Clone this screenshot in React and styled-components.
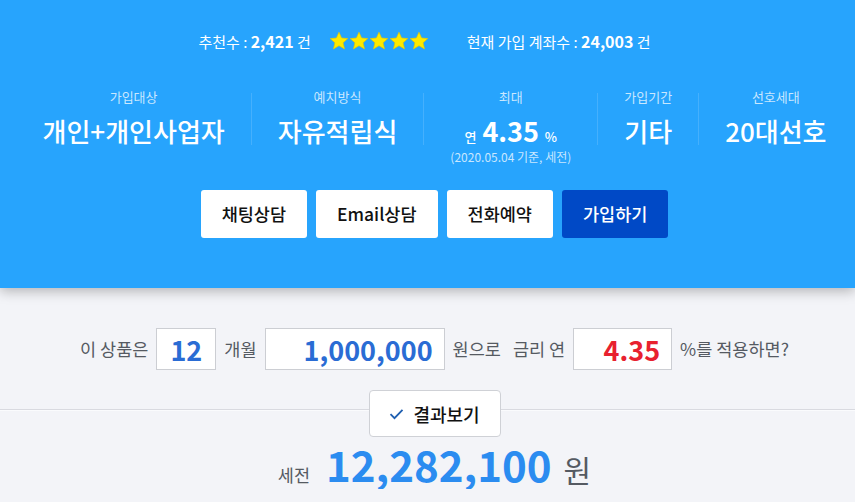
import React from "react";
import styled, { createGlobalStyle } from "styled-components";

const GlobalStyle = createGlobalStyle`
  body {
    margin: 0;
    background: #f3f4f8;
    font-family: "Noto Sans CJK KR", "Noto Sans", sans-serif;
  }
`;

const infos = [
  { label: "가입대상", value: "개인+개인사업자" },
  { label: "예치방식", value: "자유적립식" },
  { label: "최대", rate: true },
  { label: "가입기간", value: "기타" },
  { label: "선호세대", value: "20대선호" },
];

const buttons = ["채팅상담", "Email상담", "전화예약", "가입하기"];

function Star() {
  return (
    <svg width="20" height="20" viewBox="0 0 24 24">
      <path
        d="M12 1.5l3.1 6.9 7.4.7-5.6 5 1.7 7.4L12 17.6l-6.6 3.9 1.7-7.4-5.6-5 7.4-.7z"
        fill="#ffea00"
        stroke="#e6c800"
        strokeWidth="0.8"
        strokeLinejoin="round"
      />
    </svg>
  );
}

function Check() {
  return (
    <svg width="15" height="12" viewBox="0 0 15 12">
      <path d="M1.5 6.2l4 4L13.5 1.8" fill="none" stroke="#1f5fb0" strokeWidth="1.8" />
    </svg>
  );
}

function App() {
  return (
    <>
      <GlobalStyle />
      <Header>
        <TopRow>
          <Stat>
            추천수 : <b>2,421</b> 건
          </Stat>
          <Stars>
            {[0, 1, 2, 3, 4].map((i) => (
              <Star key={i} />
            ))}
          </Stars>
          <Stat>
            현재 가입 계좌수 : <b>24,003</b> 건
          </Stat>
        </TopRow>

        <InfoRow>
          {infos.map((info, idx) => (
            <React.Fragment key={info.label}>
              {idx > 0 && <Divider />}
              <Column>
                <Label>{info.label}</Label>
                {info.rate ? (
                  <>
                    <Value>
                      <Small>연</Small> <Rate>4.35</Rate> <Small>%</Small>
                    </Value>
                    <Note>(2020.05.04 기준, 세전)</Note>
                  </>
                ) : (
                  <Value>{info.value}</Value>
                )}
              </Column>
            </React.Fragment>
          ))}
        </InfoRow>

        <ButtonRow>
          {buttons.map((b, idx) => (
            <Button key={b} primary={idx === 3}>
              {b}
            </Button>
          ))}
        </ButtonRow>
      </Header>

      <Calc>
        <CalcRow>
          <Text>이 상품은</Text>
          <Box width={60} align="center">
            12
          </Box>
          <Text>개월</Text>
          <Box width={180}>1,000,000</Box>
          <Text>원으로</Text>
          <Text gap={4}>금리 연</Text>
          <Box width={99} red>
            4.35
          </Box>
          <Text>%를 적용하면?</Text>
        </CalcRow>

        <ResultBar>
          <ResultButton>
            <Check />
            결과보기
          </ResultButton>
        </ResultBar>

        <Result>
          <Text>세전</Text>
          <Amount>12,282,100</Amount>
          <Won>원</Won>
        </Result>
      </Calc>
    </>
  );
}

const Header = styled.header`
  position: relative;
  z-index: 1;
  background: #27a4fd;
  color: #fff;
  padding: 30px 0 50px;
  box-shadow: 0 3px 12px rgba(0, 0, 0, 0.28);
`;

const TopRow = styled.div`
  display: flex;
  justify-content: center;
  align-items: center;
  height: 22px;
  padding-right: 6px;
`;

const Stat = styled.div`
  font-size: 15px;
  line-height: 22px;
  b {
    font-weight: 700;
    font-size: 16px;
  }
`;

const Stars = styled.div`
  display: flex;
  margin: 0 38px 0 18px;
`;

const InfoRow = styled.div`
  display: flex;
  justify-content: center;
  margin-top: 36px;
  padding-left: 14px;
`;

const Divider = styled.div`
  width: 1px;
  height: 52px;
  margin-top: 5px;
  background: rgba(255, 255, 255, 0.14);
`;

const Column = styled.div`
  display: flex;
  flex-direction: column;
  align-items: center;
  padding: 0 26px;
`;

const Label = styled.div`
  font-size: 13px;
  line-height: 18px;
  color: rgba(255, 255, 255, 0.75);
`;

const Value = styled.div`
  margin-top: 8px;
  font-size: 26px;
  font-weight: 500;
  line-height: 34px;
  white-space: nowrap;
`;

const Small = styled.span`
  font-size: 13px;
  line-height: 1;
`;

const Rate = styled.span`
  font-size: 27px;
  font-weight: 700;
  line-height: 1;
`;

const Note = styled.div`
  margin-top: 1px;
  font-size: 12px;
  line-height: 16px;
  color: rgba(255, 255, 255, 0.75);
`;

const ButtonRow = styled.div`
  display: flex;
  justify-content: center;
  gap: 9px;
  margin-top: 25px;
  padding-left: 14px;
`;

const Button = styled.button`
  height: 48px;
  padding: 0 21px;
  border: none;
  border-radius: 3px;
  font-family: inherit;
  font-size: 17.5px;
  font-weight: 500;
  line-height: 1;
  background: ${(p) => (p.primary ? "#0049c6" : "#fff")};
  color: ${(p) => (p.primary ? "#fff" : "#111")};
`;

const Calc = styled.section`
  padding-top: 40px;
`;

const CalcRow = styled.div`
  display: flex;
  justify-content: center;
  align-items: center;
  gap: 8px;
  padding-left: 14px;
`;

const Text = styled.span`
  font-size: 17.5px;
  line-height: 24px;
  color: #555a62;
  margin-left: ${(p) => p.gap || 0}px;
  white-space: nowrap;
`;

const Box = styled.div`
  box-sizing: border-box;
  width: ${(p) => p.width}px;
  height: 42px;
  padding: 0 11px;
  border: 1px solid #ccced3;
  background: #fff;
  display: flex;
  align-items: center;
  justify-content: ${(p) => (p.align === "center" ? "center" : "flex-end")};
  font-size: 27px;
  font-weight: 700;
  line-height: 1;
  color: ${(p) => (p.red ? "#e8212f" : "#2a6cd4")};
`;

const ResultBar = styled.div`
  position: relative;
  display: flex;
  justify-content: center;
  margin-top: 20px;
  padding-left: 14px;
  &::before {
    content: "";
    position: absolute;
    left: 0;
    right: 0;
    top: 19px;
    height: 1px;
    background: #d9dae0;
    box-shadow: 0 1px 0 #fafbfd;
  }
`;

const ResultButton = styled.button`
  position: relative;
  box-sizing: border-box;
  width: 132px;
  height: 47px;
  display: flex;
  align-items: center;
  justify-content: center;
  gap: 9px;
  background: #fff;
  border: 1px solid #cfd1d6;
  border-radius: 4px;
  font-family: inherit;
  font-size: 18px;
  font-weight: 500;
  color: #111;
`;

const Result = styled.div`
  display: flex;
  justify-content: center;
  align-items: baseline;
  margin-top: 2px;
  padding-left: 14px;
`;

const Amount = styled.span`
  margin: 0 12px 0 16px;
  font-size: 42px;
  font-weight: 700;
  line-height: 50px;
  color: #2b8cf0;
`;

const Won = styled.span`
  font-size: 30px;
  line-height: 1;
  color: #555a62;
`;

export default App;
